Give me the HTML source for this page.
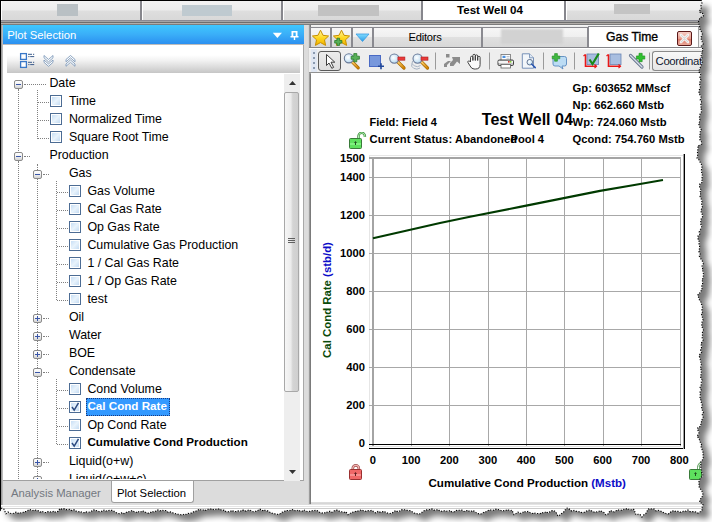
<!DOCTYPE html>
<html><head><meta charset="utf-8">
<style>
*{margin:0;padding:0;box-sizing:border-box}
html,body{width:712px;height:522px;overflow:hidden;background:#fff}
body{position:relative;font-family:"Liberation Sans",sans-serif;font-size:12px;color:#000}
.a{position:absolute}
#shadow{position:absolute;left:0;top:0}
#app{position:absolute;left:0;top:0;width:712px;height:522px;background:#d6d6d6;overflow:hidden}
.t{position:absolute;white-space:nowrap;line-height:1}
#toptabs{left:0;top:0;width:712px;height:20px;background:linear-gradient(#f3f3f3 0,#ededed 9px,#dedede 10px,#d8d8d8 20px);border-top:1px solid #000}
.blur{position:absolute;background:#b9c0c4;filter:blur(0.6px)}
.tsep{position:absolute;top:1px;width:3px;height:19px;background:linear-gradient(90deg,#86868c 0,#86868c 2px,#fff 2px)}
#hdr{left:3px;top:25px;width:301px;height:19px;background:linear-gradient(#3fc7fe,#3aaef8 50%,#2b90f0)}
#tb1{left:7px;top:48px;width:293px;height:25px;background:linear-gradient(#fff 0,#fff 28%,#f2f2f2 50%,#d8d8d8 80%,#c6c6c6 100%)}
#tree{left:3px;top:45px;width:301px;height:436px;background:#fff;border-right:1px solid #a8a8a8;border-bottom:1px solid #a0a0a0}
.row{position:absolute;font-size:12.4px;line-height:1;white-space:nowrap;color:#000}
.cb{position:absolute;width:12px;height:12px;border:1px solid #4c6c94;box-shadow:inset 0 0 0 1px #fff;background:linear-gradient(135deg,#c0daf4,#e8f3fc 50%,#bcd6f0)}
.exp{position:absolute;width:9px;height:9px;border:1px solid #8a8a8a;border-radius:2px;background:linear-gradient(#fff,#f0f0f0 50%,#d4d4d4)}
.exp::after{content:"";position:absolute;left:1px;top:3px;width:5px;height:1px;background:#3a56a8}
.exp.plus::before{content:"";position:absolute;left:3px;top:1px;width:1px;height:5px;background:#3a56a8}
.vd{position:absolute;width:1px;border-left:1px dotted #808080}
.hd{position:absolute;height:1px;border-top:1px dotted #808080}
#chart{left:311px;top:73px;width:401px;height:430px;background:#fff}
.rtab{position:absolute;top:27px;height:20px;border:1px solid #8a8a90;border-bottom:none;background:linear-gradient(#f6f6f6,#efefef 50%,#e0e0e0 50%,#d8d8d8)}
.tbsep{position:absolute;top:52px;width:2px;height:18px;border-left:1px solid #a0a0a0;border-right:1px solid #fff}
.gl{position:absolute;background:#a8a8a8}
.yl{position:absolute;font:bold 11.2px "Liberation Sans",sans-serif;line-height:1;text-align:right}
.xl{position:absolute;font:bold 11.2px "Liberation Sans",sans-serif;line-height:1;text-align:center}
</style></head><body>
<svg id="shadow" width="712" height="522"><defs><filter id="bl" x="-10%" y="-10%" width="120%" height="120%"><feGaussianBlur stdDeviation="3"/></filter></defs><path d="M0.0 0.0 L700.9 0.0 L702.0 2.0 L701.8 4.0 L700.8 6.0 L701.2 8.0 L700.1 10.0 L699.2 12.0 L703.5 14.0 L703.3 16.0 L699.7 18.0 L699.2 20.0 L698.4 22.0 L698.9 24.0 L699.5 26.0 L699.9 28.0 L700.0 30.0 L701.6 32.0 L702.3 34.0 L701.5 36.0 L700.8 38.0 L701.6 40.0 L702.3 42.0 L703.2 44.0 L701.3 46.0 L702.3 48.0 L703.2 50.0 L701.6 52.0 L702.2 54.0 L700.8 56.0 L702.0 58.0 L700.8 60.0 L702.2 62.0 L702.0 64.0 L701.0 66.0 L700.0 68.0 L699.3 70.0 L699.0 72.0 L700.7 74.0 L700.3 76.0 L699.7 78.0 L700.9 80.0 L699.9 82.0 L699.4 84.0 L700.5 86.0 L700.1 88.0 L699.3 90.0 L699.0 92.0 L699.2 94.0 L700.8 96.0 L701.1 98.0 L700.2 100.0 L701.5 102.0 L700.7 104.0 L701.4 106.0 L700.5 108.0 L701.6 110.0 L701.3 112.0 L700.0 114.0 L699.6 116.0 L699.3 118.0 L700.0 120.0 L699.4 122.0 L698.7 124.0 L699.4 126.0 L700.1 128.0 L701.4 130.0 L700.1 132.0 L700.1 134.0 L699.5 136.0 L700.1 138.0 L699.9 140.0 L701.5 142.0 L701.8 144.0 L697.7 146.0 L698.2 148.0 L697.7 150.0 L697.4 152.0 L697.8 154.0 L697.5 156.0 L697.0 158.0 L699.1 160.0 L700.0 162.0 L701.2 164.0 L701.9 166.0 L701.9 168.0 L701.4 170.0 L701.6 172.0 L701.8 174.0 L702.6 176.0 L701.9 178.0 L701.9 180.0 L702.5 182.0 L699.8 184.0 L699.4 186.0 L699.8 188.0 L701.2 190.0 L699.9 192.0 L700.6 194.0 L699.9 196.0 L700.6 198.0 L701.7 200.0 L701.9 202.0 L701.5 204.0 L702.5 206.0 L701.8 208.0 L701.1 210.0 L701.1 212.0 L702.0 214.0 L702.9 216.0 L701.6 218.0 L700.8 220.0 L700.7 222.0 L700.7 224.0 L701.7 226.0 L701.4 228.0 L700.1 230.0 L699.1 232.0 L699.8 234.0 L698.0 236.0 L698.0 238.0 L698.1 240.0 L699.6 242.0 L699.0 244.0 L699.6 246.0 L699.6 248.0 L699.1 250.0 L699.0 252.0 L700.1 254.0 L699.2 256.0 L700.3 258.0 L701.7 260.0 L702.8 262.0 L703.3 264.0 L702.0 266.0 L702.7 268.0 L702.2 270.0 L703.5 272.0 L703.3 274.0 L703.3 276.0 L703.1 278.0 L701.8 280.0 L702.9 282.0 L702.5 284.0 L701.7 286.0 L702.4 288.0 L701.0 290.0 L701.1 292.0 L698.2 294.0 L697.7 296.0 L699.0 298.0 L699.4 300.0 L700.9 302.0 L701.4 304.0 L702.3 306.0 L702.4 308.0 L701.9 310.0 L702.5 312.0 L701.3 314.0 L702.3 316.0 L702.4 318.0 L703.0 320.0 L702.0 322.0 L701.9 324.0 L701.6 326.0 L702.5 328.0 L703.4 330.0 L702.5 332.0 L702.3 334.0 L702.5 336.0 L702.2 338.0 L703.1 340.0 L702.0 342.0 L700.8 344.0 L701.6 346.0 L701.4 348.0 L700.5 350.0 L701.7 352.0 L700.0 354.0 L699.0 356.0 L700.0 358.0 L700.3 360.0 L700.7 362.0 L701.1 364.0 L701.6 366.0 L700.2 368.0 L701.2 370.0 L701.3 372.0 L701.3 374.0 L700.5 376.0 L700.8 378.0 L702.0 380.0 L701.3 382.0 L701.5 384.0 L700.6 386.0 L699.9 388.0 L701.2 390.0 L700.1 392.0 L700.1 394.0 L700.5 396.0 L699.8 398.0 L700.9 400.0 L701.1 402.0 L701.9 404.0 L702.2 406.0 L701.5 408.0 L702.2 410.0 L703.5 412.0 L702.1 414.0 L702.7 416.0 L703.4 418.0 L701.6 420.0 L701.4 422.0 L700.8 424.0 L700.9 426.0 L697.5 428.0 L697.6 430.0 L699.0 432.0 L698.7 434.0 L697.0 436.0 L698.5 438.0 L699.5 440.0 L700.1 442.0 L701.6 444.0 L700.8 446.0 L701.5 448.0 L702.2 450.0 L702.9 452.0 L703.0 454.0 L703.2 456.0 L703.2 458.0 L702.2 460.0 L700.7 462.0 L701.1 464.0 L700.4 466.0 L701.0 468.0 L701.4 470.0 L701.4 472.0 L702.6 474.0 L702.7 476.0 L700.1 478.0 L699.7 480.0 L698.8 482.0 L699.0 484.0 L698.9 486.0 L699.5 488.0 L701.1 490.0 L702.4 492.0 L702.8 494.0 L702.6 496.0 L701.0 498.0 L700.1 500.0 L699.5 502.0 L703.0 504.0 L702.6 506.0 L701.8 508.0 L702.0 510.0 L700.0 511.9 L698.0 513.1 L696.0 512.0 L694.0 511.6 L692.0 511.6 L690.0 511.6 L688.0 510.0 L686.0 511.2 L684.0 510.9 L682.0 511.9 L680.0 512.1 L678.0 511.3 L676.0 511.6 L674.0 510.5 L672.0 511.1 L670.0 512.6 L668.0 514.1 L666.0 513.6 L664.0 512.7 L662.0 511.6 L660.0 510.8 L658.0 510.2 L656.0 510.8 L654.0 508.9 L652.0 509.1 L650.0 508.6 L648.0 509.1 L646.0 513.3 L644.0 514.6 L642.0 517.0 L640.0 514.3 L638.0 514.3 L636.0 514.8 L634.0 509.5 L632.0 509.3 L630.0 510.3 L628.0 508.6 L626.0 508.9 L624.0 509.3 L622.0 510.1 L620.0 510.5 L618.0 509.7 L616.0 510.8 L614.0 511.9 L612.0 511.0 L610.0 510.6 L608.0 514.0 L606.0 514.9 L604.0 512.5 L602.0 511.4 L600.0 510.6 L598.0 512.0 L596.0 511.8 L594.0 512.0 L592.0 511.1 L590.0 509.9 L588.0 510.4 L586.0 511.2 L584.0 512.4 L582.0 512.6 L580.0 511.7 L578.0 511.6 L576.0 511.1 L574.0 510.4 L572.0 511.3 L570.0 509.6 L568.0 508.0 L566.0 508.4 L564.0 511.8 L562.0 513.0 L560.0 514.8 L558.0 516.2 L556.0 512.1 L554.0 510.7 L552.0 510.6 L550.0 511.7 L548.0 512.9 L546.0 511.6 L544.0 513.1 L542.0 512.5 L540.0 513.6 L538.0 513.5 L536.0 513.5 L534.0 512.8 L532.0 513.5 L530.0 512.5 L528.0 511.4 L526.0 512.2 L524.0 511.3 L522.0 513.2 L520.0 513.3 L518.0 512.1 L516.0 513.5 L514.0 514.7 L512.0 510.2 L510.0 510.8 L508.0 509.6 L506.0 510.3 L504.0 510.6 L502.0 511.0 L500.0 510.1 L498.0 509.5 L496.0 509.1 L494.0 510.1 L492.0 510.4 L490.0 509.7 L488.0 510.5 L486.0 511.7 L484.0 512.1 L482.0 513.6 L480.0 514.1 L478.0 513.6 L476.0 512.4 L474.0 511.0 L472.0 510.7 L470.0 511.9 L468.0 510.3 L466.0 510.8 L464.0 511.5 L462.0 510.1 L460.0 510.3 L458.0 510.2 L456.0 510.5 L454.0 511.9 L452.0 511.9 L450.0 510.5 L448.0 511.5 L446.0 510.8 L444.0 510.8 L442.0 511.3 L440.0 511.0 L438.0 509.4 L436.0 510.2 L434.0 510.1 L432.0 508.8 L430.0 509.5 L428.0 509.8 L426.0 509.9 L424.0 510.8 L422.0 512.3 L420.0 513.8 L418.0 514.0 L416.0 513.3 L414.0 513.0 L412.0 511.6 L410.0 510.6 L408.0 510.5 L406.0 509.8 L404.0 509.7 L402.0 509.6 L400.0 510.8 L398.0 511.9 L396.0 510.6 L394.0 511.5 L392.0 513.2 L390.0 513.5 L388.0 513.3 L386.0 512.4 L384.0 511.3 L382.0 511.9 L380.0 512.1 L378.0 511.3 L376.0 513.0 L374.0 511.9 L372.0 510.2 L370.0 510.8 L368.0 510.6 L366.0 511.2 L364.0 511.0 L362.0 510.0 L360.0 510.3 L358.0 511.0 L356.0 511.1 L354.0 512.1 L352.0 512.2 L350.0 513.4 L348.0 514.7 L346.0 511.8 L344.0 512.4 L342.0 511.7 L340.0 511.7 L338.0 510.2 L336.0 510.1 L334.0 510.9 L332.0 512.2 L330.0 511.2 L328.0 512.3 L326.0 511.9 L324.0 513.4 L322.0 512.9 L320.0 512.5 L318.0 511.1 L316.0 510.2 L314.0 510.6 L312.0 510.7 L310.0 511.2 L308.0 511.6 L306.0 511.2 L304.0 509.9 L302.0 511.2 L300.0 510.9 L298.0 510.0 L296.0 511.3 L294.0 509.9 L292.0 509.6 L290.0 510.4 L288.0 510.5 L286.0 510.4 L284.0 511.6 L282.0 512.3 L280.0 513.8 L278.0 514.4 L276.0 514.2 L274.0 513.5 L272.0 513.1 L270.0 512.3 L268.0 510.9 L266.0 510.8 L264.0 509.7 L262.0 510.7 L260.0 509.1 L258.0 510.2 L256.0 511.1 L254.0 511.8 L252.0 511.4 L250.0 510.0 L248.0 510.2 L246.0 511.1 L244.0 510.1 L242.0 510.1 L240.0 511.5 L238.0 510.9 L236.0 511.6 L234.0 511.5 L232.0 510.3 L230.0 511.6 L228.0 511.7 L226.0 511.6 L224.0 510.1 L222.0 510.6 L220.0 509.1 L218.0 509.0 L216.0 509.3 L214.0 509.8 L212.0 508.9 L210.0 509.0 L208.0 509.3 L206.0 510.3 L204.0 509.6 L202.0 510.6 L200.0 509.2 L198.0 509.9 L196.0 511.0 L194.0 511.6 L192.0 512.7 L190.0 513.6 L188.0 513.4 L186.0 514.4 L184.0 514.2 L182.0 515.0 L180.0 514.5 L178.0 514.2 L176.0 513.8 L174.0 513.4 L172.0 512.4 L170.0 511.9 L168.0 512.1 L166.0 510.5 L164.0 510.6 L162.0 510.2 L160.0 510.8 L158.0 509.9 L156.0 510.8 L154.0 512.1 L152.0 511.4 L150.0 512.9 L148.0 513.1 L146.0 512.6 L144.0 511.2 L142.0 510.9 L140.0 512.5 L138.0 511.4 L136.0 512.5 L134.0 511.6 L132.0 510.6 L130.0 511.4 L128.0 511.8 L126.0 512.4 L124.0 513.6 L122.0 512.7 L120.0 513.7 L118.0 513.4 L116.0 512.4 L114.0 511.2 L112.0 510.3 L110.0 510.4 L108.0 510.5 L106.0 511.0 L104.0 510.0 L102.0 511.1 L100.0 512.0 L98.0 511.2 L96.0 510.4 L94.0 509.8 L92.0 510.8 L90.0 512.0 L88.0 512.4 L86.0 511.8 L84.0 512.6 L82.0 512.4 L80.0 511.5 L78.0 511.8 L76.0 510.9 L74.0 509.6 L72.0 510.6 L70.0 509.3 L68.0 509.7 L66.0 509.6 L64.0 508.7 L62.0 509.3 L60.0 508.5 L58.0 511.3 L56.0 512.5 L54.0 511.1 L52.0 512.1 L50.0 511.8 L48.0 511.6 L46.0 512.5 L44.0 512.4 L42.0 511.2 L40.0 512.1 L38.0 510.6 L36.0 510.2 L34.0 510.1 L32.0 510.5 L30.0 509.5 L28.0 510.3 L26.0 511.5 L24.0 511.7 L22.0 513.2 L20.0 512.6 L18.0 513.1 L16.0 512.1 L14.0 513.2 L12.0 513.8 L10.0 513.1 L8.0 512.0 L6.0 513.8 L4.0 509.2 L2.0 508.0 L0.0 510.9 L0.0 511.5 Z" fill="#000" fill-opacity="0.52" filter="url(#bl)" transform="translate(7,6.5)"/></svg>
<div id="app" style="clip-path:polygon(0.0px 0.0px,700.9px 0.0px,702.0px 2.0px,701.8px 4.0px,700.8px 6.0px,701.2px 8.0px,700.1px 10.0px,699.2px 12.0px,703.5px 14.0px,703.3px 16.0px,699.7px 18.0px,699.2px 20.0px,698.4px 22.0px,698.9px 24.0px,699.5px 26.0px,699.9px 28.0px,700.0px 30.0px,701.6px 32.0px,702.3px 34.0px,701.5px 36.0px,700.8px 38.0px,701.6px 40.0px,702.3px 42.0px,703.2px 44.0px,701.3px 46.0px,702.3px 48.0px,703.2px 50.0px,701.6px 52.0px,702.2px 54.0px,700.8px 56.0px,702.0px 58.0px,700.8px 60.0px,702.2px 62.0px,702.0px 64.0px,701.0px 66.0px,700.0px 68.0px,699.3px 70.0px,699.0px 72.0px,700.7px 74.0px,700.3px 76.0px,699.7px 78.0px,700.9px 80.0px,699.9px 82.0px,699.4px 84.0px,700.5px 86.0px,700.1px 88.0px,699.3px 90.0px,699.0px 92.0px,699.2px 94.0px,700.8px 96.0px,701.1px 98.0px,700.2px 100.0px,701.5px 102.0px,700.7px 104.0px,701.4px 106.0px,700.5px 108.0px,701.6px 110.0px,701.3px 112.0px,700.0px 114.0px,699.6px 116.0px,699.3px 118.0px,700.0px 120.0px,699.4px 122.0px,698.7px 124.0px,699.4px 126.0px,700.1px 128.0px,701.4px 130.0px,700.1px 132.0px,700.1px 134.0px,699.5px 136.0px,700.1px 138.0px,699.9px 140.0px,701.5px 142.0px,701.8px 144.0px,697.7px 146.0px,698.2px 148.0px,697.7px 150.0px,697.4px 152.0px,697.8px 154.0px,697.5px 156.0px,697.0px 158.0px,699.1px 160.0px,700.0px 162.0px,701.2px 164.0px,701.9px 166.0px,701.9px 168.0px,701.4px 170.0px,701.6px 172.0px,701.8px 174.0px,702.6px 176.0px,701.9px 178.0px,701.9px 180.0px,702.5px 182.0px,699.8px 184.0px,699.4px 186.0px,699.8px 188.0px,701.2px 190.0px,699.9px 192.0px,700.6px 194.0px,699.9px 196.0px,700.6px 198.0px,701.7px 200.0px,701.9px 202.0px,701.5px 204.0px,702.5px 206.0px,701.8px 208.0px,701.1px 210.0px,701.1px 212.0px,702.0px 214.0px,702.9px 216.0px,701.6px 218.0px,700.8px 220.0px,700.7px 222.0px,700.7px 224.0px,701.7px 226.0px,701.4px 228.0px,700.1px 230.0px,699.1px 232.0px,699.8px 234.0px,698.0px 236.0px,698.0px 238.0px,698.1px 240.0px,699.6px 242.0px,699.0px 244.0px,699.6px 246.0px,699.6px 248.0px,699.1px 250.0px,699.0px 252.0px,700.1px 254.0px,699.2px 256.0px,700.3px 258.0px,701.7px 260.0px,702.8px 262.0px,703.3px 264.0px,702.0px 266.0px,702.7px 268.0px,702.2px 270.0px,703.5px 272.0px,703.3px 274.0px,703.3px 276.0px,703.1px 278.0px,701.8px 280.0px,702.9px 282.0px,702.5px 284.0px,701.7px 286.0px,702.4px 288.0px,701.0px 290.0px,701.1px 292.0px,698.2px 294.0px,697.7px 296.0px,699.0px 298.0px,699.4px 300.0px,700.9px 302.0px,701.4px 304.0px,702.3px 306.0px,702.4px 308.0px,701.9px 310.0px,702.5px 312.0px,701.3px 314.0px,702.3px 316.0px,702.4px 318.0px,703.0px 320.0px,702.0px 322.0px,701.9px 324.0px,701.6px 326.0px,702.5px 328.0px,703.4px 330.0px,702.5px 332.0px,702.3px 334.0px,702.5px 336.0px,702.2px 338.0px,703.1px 340.0px,702.0px 342.0px,700.8px 344.0px,701.6px 346.0px,701.4px 348.0px,700.5px 350.0px,701.7px 352.0px,700.0px 354.0px,699.0px 356.0px,700.0px 358.0px,700.3px 360.0px,700.7px 362.0px,701.1px 364.0px,701.6px 366.0px,700.2px 368.0px,701.2px 370.0px,701.3px 372.0px,701.3px 374.0px,700.5px 376.0px,700.8px 378.0px,702.0px 380.0px,701.3px 382.0px,701.5px 384.0px,700.6px 386.0px,699.9px 388.0px,701.2px 390.0px,700.1px 392.0px,700.1px 394.0px,700.5px 396.0px,699.8px 398.0px,700.9px 400.0px,701.1px 402.0px,701.9px 404.0px,702.2px 406.0px,701.5px 408.0px,702.2px 410.0px,703.5px 412.0px,702.1px 414.0px,702.7px 416.0px,703.4px 418.0px,701.6px 420.0px,701.4px 422.0px,700.8px 424.0px,700.9px 426.0px,697.5px 428.0px,697.6px 430.0px,699.0px 432.0px,698.7px 434.0px,697.0px 436.0px,698.5px 438.0px,699.5px 440.0px,700.1px 442.0px,701.6px 444.0px,700.8px 446.0px,701.5px 448.0px,702.2px 450.0px,702.9px 452.0px,703.0px 454.0px,703.2px 456.0px,703.2px 458.0px,702.2px 460.0px,700.7px 462.0px,701.1px 464.0px,700.4px 466.0px,701.0px 468.0px,701.4px 470.0px,701.4px 472.0px,702.6px 474.0px,702.7px 476.0px,700.1px 478.0px,699.7px 480.0px,698.8px 482.0px,699.0px 484.0px,698.9px 486.0px,699.5px 488.0px,701.1px 490.0px,702.4px 492.0px,702.8px 494.0px,702.6px 496.0px,701.0px 498.0px,700.1px 500.0px,699.5px 502.0px,703.0px 504.0px,702.6px 506.0px,701.8px 508.0px,702.0px 510.0px,700.0px 511.9px,698.0px 513.1px,696.0px 512.0px,694.0px 511.6px,692.0px 511.6px,690.0px 511.6px,688.0px 510.0px,686.0px 511.2px,684.0px 510.9px,682.0px 511.9px,680.0px 512.1px,678.0px 511.3px,676.0px 511.6px,674.0px 510.5px,672.0px 511.1px,670.0px 512.6px,668.0px 514.1px,666.0px 513.6px,664.0px 512.7px,662.0px 511.6px,660.0px 510.8px,658.0px 510.2px,656.0px 510.8px,654.0px 508.9px,652.0px 509.1px,650.0px 508.6px,648.0px 509.1px,646.0px 513.3px,644.0px 514.6px,642.0px 517.0px,640.0px 514.3px,638.0px 514.3px,636.0px 514.8px,634.0px 509.5px,632.0px 509.3px,630.0px 510.3px,628.0px 508.6px,626.0px 508.9px,624.0px 509.3px,622.0px 510.1px,620.0px 510.5px,618.0px 509.7px,616.0px 510.8px,614.0px 511.9px,612.0px 511.0px,610.0px 510.6px,608.0px 514.0px,606.0px 514.9px,604.0px 512.5px,602.0px 511.4px,600.0px 510.6px,598.0px 512.0px,596.0px 511.8px,594.0px 512.0px,592.0px 511.1px,590.0px 509.9px,588.0px 510.4px,586.0px 511.2px,584.0px 512.4px,582.0px 512.6px,580.0px 511.7px,578.0px 511.6px,576.0px 511.1px,574.0px 510.4px,572.0px 511.3px,570.0px 509.6px,568.0px 508.0px,566.0px 508.4px,564.0px 511.8px,562.0px 513.0px,560.0px 514.8px,558.0px 516.2px,556.0px 512.1px,554.0px 510.7px,552.0px 510.6px,550.0px 511.7px,548.0px 512.9px,546.0px 511.6px,544.0px 513.1px,542.0px 512.5px,540.0px 513.6px,538.0px 513.5px,536.0px 513.5px,534.0px 512.8px,532.0px 513.5px,530.0px 512.5px,528.0px 511.4px,526.0px 512.2px,524.0px 511.3px,522.0px 513.2px,520.0px 513.3px,518.0px 512.1px,516.0px 513.5px,514.0px 514.7px,512.0px 510.2px,510.0px 510.8px,508.0px 509.6px,506.0px 510.3px,504.0px 510.6px,502.0px 511.0px,500.0px 510.1px,498.0px 509.5px,496.0px 509.1px,494.0px 510.1px,492.0px 510.4px,490.0px 509.7px,488.0px 510.5px,486.0px 511.7px,484.0px 512.1px,482.0px 513.6px,480.0px 514.1px,478.0px 513.6px,476.0px 512.4px,474.0px 511.0px,472.0px 510.7px,470.0px 511.9px,468.0px 510.3px,466.0px 510.8px,464.0px 511.5px,462.0px 510.1px,460.0px 510.3px,458.0px 510.2px,456.0px 510.5px,454.0px 511.9px,452.0px 511.9px,450.0px 510.5px,448.0px 511.5px,446.0px 510.8px,444.0px 510.8px,442.0px 511.3px,440.0px 511.0px,438.0px 509.4px,436.0px 510.2px,434.0px 510.1px,432.0px 508.8px,430.0px 509.5px,428.0px 509.8px,426.0px 509.9px,424.0px 510.8px,422.0px 512.3px,420.0px 513.8px,418.0px 514.0px,416.0px 513.3px,414.0px 513.0px,412.0px 511.6px,410.0px 510.6px,408.0px 510.5px,406.0px 509.8px,404.0px 509.7px,402.0px 509.6px,400.0px 510.8px,398.0px 511.9px,396.0px 510.6px,394.0px 511.5px,392.0px 513.2px,390.0px 513.5px,388.0px 513.3px,386.0px 512.4px,384.0px 511.3px,382.0px 511.9px,380.0px 512.1px,378.0px 511.3px,376.0px 513.0px,374.0px 511.9px,372.0px 510.2px,370.0px 510.8px,368.0px 510.6px,366.0px 511.2px,364.0px 511.0px,362.0px 510.0px,360.0px 510.3px,358.0px 511.0px,356.0px 511.1px,354.0px 512.1px,352.0px 512.2px,350.0px 513.4px,348.0px 514.7px,346.0px 511.8px,344.0px 512.4px,342.0px 511.7px,340.0px 511.7px,338.0px 510.2px,336.0px 510.1px,334.0px 510.9px,332.0px 512.2px,330.0px 511.2px,328.0px 512.3px,326.0px 511.9px,324.0px 513.4px,322.0px 512.9px,320.0px 512.5px,318.0px 511.1px,316.0px 510.2px,314.0px 510.6px,312.0px 510.7px,310.0px 511.2px,308.0px 511.6px,306.0px 511.2px,304.0px 509.9px,302.0px 511.2px,300.0px 510.9px,298.0px 510.0px,296.0px 511.3px,294.0px 509.9px,292.0px 509.6px,290.0px 510.4px,288.0px 510.5px,286.0px 510.4px,284.0px 511.6px,282.0px 512.3px,280.0px 513.8px,278.0px 514.4px,276.0px 514.2px,274.0px 513.5px,272.0px 513.1px,270.0px 512.3px,268.0px 510.9px,266.0px 510.8px,264.0px 509.7px,262.0px 510.7px,260.0px 509.1px,258.0px 510.2px,256.0px 511.1px,254.0px 511.8px,252.0px 511.4px,250.0px 510.0px,248.0px 510.2px,246.0px 511.1px,244.0px 510.1px,242.0px 510.1px,240.0px 511.5px,238.0px 510.9px,236.0px 511.6px,234.0px 511.5px,232.0px 510.3px,230.0px 511.6px,228.0px 511.7px,226.0px 511.6px,224.0px 510.1px,222.0px 510.6px,220.0px 509.1px,218.0px 509.0px,216.0px 509.3px,214.0px 509.8px,212.0px 508.9px,210.0px 509.0px,208.0px 509.3px,206.0px 510.3px,204.0px 509.6px,202.0px 510.6px,200.0px 509.2px,198.0px 509.9px,196.0px 511.0px,194.0px 511.6px,192.0px 512.7px,190.0px 513.6px,188.0px 513.4px,186.0px 514.4px,184.0px 514.2px,182.0px 515.0px,180.0px 514.5px,178.0px 514.2px,176.0px 513.8px,174.0px 513.4px,172.0px 512.4px,170.0px 511.9px,168.0px 512.1px,166.0px 510.5px,164.0px 510.6px,162.0px 510.2px,160.0px 510.8px,158.0px 509.9px,156.0px 510.8px,154.0px 512.1px,152.0px 511.4px,150.0px 512.9px,148.0px 513.1px,146.0px 512.6px,144.0px 511.2px,142.0px 510.9px,140.0px 512.5px,138.0px 511.4px,136.0px 512.5px,134.0px 511.6px,132.0px 510.6px,130.0px 511.4px,128.0px 511.8px,126.0px 512.4px,124.0px 513.6px,122.0px 512.7px,120.0px 513.7px,118.0px 513.4px,116.0px 512.4px,114.0px 511.2px,112.0px 510.3px,110.0px 510.4px,108.0px 510.5px,106.0px 511.0px,104.0px 510.0px,102.0px 511.1px,100.0px 512.0px,98.0px 511.2px,96.0px 510.4px,94.0px 509.8px,92.0px 510.8px,90.0px 512.0px,88.0px 512.4px,86.0px 511.8px,84.0px 512.6px,82.0px 512.4px,80.0px 511.5px,78.0px 511.8px,76.0px 510.9px,74.0px 509.6px,72.0px 510.6px,70.0px 509.3px,68.0px 509.7px,66.0px 509.6px,64.0px 508.7px,62.0px 509.3px,60.0px 508.5px,58.0px 511.3px,56.0px 512.5px,54.0px 511.1px,52.0px 512.1px,50.0px 511.8px,48.0px 511.6px,46.0px 512.5px,44.0px 512.4px,42.0px 511.2px,40.0px 512.1px,38.0px 510.6px,36.0px 510.2px,34.0px 510.1px,32.0px 510.5px,30.0px 509.5px,28.0px 510.3px,26.0px 511.5px,24.0px 511.7px,22.0px 513.2px,20.0px 512.6px,18.0px 513.1px,16.0px 512.1px,14.0px 513.2px,12.0px 513.8px,10.0px 513.1px,8.0px 512.0px,6.0px 513.8px,4.0px 509.2px,2.0px 508.0px,0.0px 510.9px,0.0px 511.5px)">

<div class="a" id="toptabs"></div>
<div class="a" style="left:0;top:0;width:1px;height:510px;background:#000"></div>
<div class="a" style="left:1px;top:1px;width:1px;height:19px;background:#fff"></div>
<div class="blur" style="left:57px;top:4px;width:21px;height:12px"></div>
<div class="tsep" style="left:140px"></div>
<div class="blur" style="left:182px;top:5px;width:50px;height:11px;background:#bfcad0"></div>
<div class="tsep" style="left:281px"></div>
<div class="blur" style="left:318px;top:5px;width:61px;height:11px;background:#c2c2c2"></div>
<div class="tsep" style="left:421px"></div>
<div class="a" style="left:423px;top:1px;width:141px;height:19px;background:#fff"></div>
<div class="t" style="left:457px;top:3.1px;font:bold 11.6px 'Liberation Sans';">Test Well 04</div>
<div class="tsep" style="left:564px"></div>
<div class="blur" style="left:614px;top:4px;width:36px;height:10px;background:#c4c4c4"></div>
<div class="a" style="left:1px;top:20px;width:711px;height:5px;background:linear-gradient(#8a8a94 0,#8a8a94 1px,#a4a4a4 1px,#a4a4a4 2px,#6e6e6e 2px,#6e6e6e 3px,#b2aeaa 3px,#b2aeaa 4px,#7c7c7c 4px)"></div>


<div class="a" style="left:1px;top:25px;width:2px;height:483px;background:linear-gradient(90deg,#909090,#c8c8c8)"></div>
<div class="a" style="left:3px;top:25px;width:305px;height:483px;background:#dcdcdc"></div>
<div class="a" id="hdr"></div>
<div class="t" style="left:7.2px;top:29.5px;color:#fff;font-size:11.3px">Plot Selection</div>
<svg class="a" style="left:270px;top:30px" width="30" height="12" viewBox="0 0 30 12">
  <path d="M2.8 2.8 L12 2.8 L7.4 8 Z" fill="#fff"/>
  <path d="M21.5 1 h6 v5 h1 v1.4 h-3.3 v2.6 h-1.4 v-2.6 h-3.3 v-1.4 h1 z M23.3 2.4 v3.6 h2.4 v-3.6 z" fill="#fff" fill-rule="evenodd"/>
</svg>
<div class="a" style="left:3px;top:44px;width:301px;height:2px;background:linear-gradient(#bcbcbc 50%,#dedede 50%)"></div>
<div class="a" id="tree"></div>
<div class="a" id="tb1"></div>

<div class="a" style="left:0;top:73px;width:284px;height:406px;overflow:hidden"><div class="a" style="left:0;top:-73px;width:284px;height:600px">
<div class="vd" style="left:18px;top:89px;height:62px"></div>
<div class="vd" style="left:18px;top:161px;height:342px"></div>
<div class="vd" style="left:37px;top:90px;height:49px"></div>
<div class="vd" style="left:37px;top:164px;height:324px"></div>
<div class="vd" style="left:56px;top:181px;height:119px"></div>
<div class="vd" style="left:56px;top:379px;height:65px"></div>
<div class="exp" style="left:14px;top:80px"></div>
<div class="hd" style="left:24px;top:84px;width:22px"></div>
<div class="row" style="left:49.4px;top:77.0px">Date</div>
<div class="hd" style="left:38px;top:102px;width:11px"></div>
<div class="cb" style="left:50px;top:95px"></div>
<div class="row" style="left:68.9px;top:95.0px">Time</div>
<div class="hd" style="left:38px;top:120px;width:11px"></div>
<div class="cb" style="left:50px;top:113px"></div>
<div class="row" style="left:68.9px;top:113.0px">Normalized Time</div>
<div class="hd" style="left:38px;top:138px;width:11px"></div>
<div class="cb" style="left:50px;top:131px"></div>
<div class="row" style="left:68.9px;top:131.0px">Square Root Time</div>
<div class="exp" style="left:14px;top:152px"></div>
<div class="hd" style="left:24px;top:156px;width:6px"></div>
<div class="row" style="left:49.4px;top:149.0px">Production</div>
<div class="exp" style="left:33px;top:170px"></div>
<div class="hd" style="left:43px;top:174px;width:6px"></div>
<div class="row" style="left:68.9px;top:167.0px">Gas</div>
<div class="hd" style="left:57px;top:192px;width:11px"></div>
<div class="cb" style="left:69px;top:185px"></div>
<div class="row" style="left:87.4px;top:185.0px">Gas Volume</div>
<div class="hd" style="left:57px;top:210px;width:11px"></div>
<div class="cb" style="left:69px;top:203px"></div>
<div class="row" style="left:87.4px;top:203.0px">Cal Gas Rate</div>
<div class="hd" style="left:57px;top:228px;width:11px"></div>
<div class="cb" style="left:69px;top:221px"></div>
<div class="row" style="left:87.4px;top:221.0px">Op Gas Rate</div>
<div class="hd" style="left:57px;top:246px;width:11px"></div>
<div class="cb" style="left:69px;top:239px"></div>
<div class="row" style="left:87.4px;top:239.0px">Cumulative Gas Production</div>
<div class="hd" style="left:57px;top:264px;width:11px"></div>
<div class="cb" style="left:69px;top:257px"></div>
<div class="row" style="left:87.4px;top:257.0px">1 / Cal Gas Rate</div>
<div class="hd" style="left:57px;top:282px;width:11px"></div>
<div class="cb" style="left:69px;top:275px"></div>
<div class="row" style="left:87.4px;top:275.0px">1 / Op Gas Rate</div>
<div class="hd" style="left:57px;top:300px;width:11px"></div>
<div class="cb" style="left:69px;top:293px"></div>
<div class="row" style="left:87.4px;top:293.0px">test</div>
<div class="exp plus" style="left:33px;top:314px"></div>
<div class="hd" style="left:43px;top:318px;width:6px"></div>
<div class="row" style="left:68.9px;top:311.0px">Oil</div>
<div class="exp plus" style="left:33px;top:332px"></div>
<div class="hd" style="left:43px;top:336px;width:6px"></div>
<div class="row" style="left:68.9px;top:329.0px">Water</div>
<div class="exp plus" style="left:33px;top:350px"></div>
<div class="hd" style="left:43px;top:354px;width:6px"></div>
<div class="row" style="left:68.9px;top:347.0px">BOE</div>
<div class="exp" style="left:33px;top:368px"></div>
<div class="hd" style="left:43px;top:372px;width:6px"></div>
<div class="row" style="left:68.9px;top:365.0px">Condensate</div>
<div class="hd" style="left:57px;top:390px;width:11px"></div>
<div class="cb" style="left:69px;top:383px"></div>
<div class="row" style="left:87.4px;top:383.0px">Cond Volume</div>
<div class="hd" style="left:57px;top:408px;width:11px"></div>
<div class="cb" style="left:69px;top:401px"><svg width="11" height="11" style="position:absolute;left:0;top:0"><path d="M2 5 L4.2 8.2 L8.5 0.8" stroke="#2c4a80" stroke-width="1.5" fill="none"/></svg></div>
<div class="a" style="left:86px;top:398px;width:84px;height:18px;background:#3399ff;border:1px dotted #1a3a80"></div>
<div class="row" style="left:87.4px;top:400.1px;color:#fff;font-weight:bold;font-size:11.65px">Cal Cond Rate</div>
<div class="hd" style="left:57px;top:426px;width:11px"></div>
<div class="cb" style="left:69px;top:419px"></div>
<div class="row" style="left:87.4px;top:419.0px">Op Cond Rate</div>
<div class="hd" style="left:57px;top:444px;width:11px"></div>
<div class="cb" style="left:69px;top:437px"><svg width="11" height="11" style="position:absolute;left:0;top:0"><path d="M2 5 L4.2 8.2 L8.5 0.8" stroke="#2c4a80" stroke-width="1.5" fill="none"/></svg></div>
<div class="row" style="left:87.4px;top:436.1px;font-weight:bold;font-size:11.65px">Cumulative Cond Production</div>
<div class="exp plus" style="left:33px;top:458px"></div>
<div class="hd" style="left:43px;top:462px;width:6px"></div>
<div class="row" style="left:68.9px;top:455.0px">Liquid(o+w)</div>
<div class="exp plus" style="left:33px;top:476px"></div>
<div class="hd" style="left:43px;top:480px;width:6px"></div>
<div class="row" style="left:68.9px;top:473.0px">Liquid(o+w+c)</div>
</div></div>

<div class="t" style="left:11px;top:487.8px;color:#737880;font-size:11.3px">Analysis Manager</div>
<div class="a" style="left:111px;top:481px;width:83px;height:22px;background:#fff;border:1px solid #a0a0a0;border-top:none;border-radius:0 0 3px 3px"></div>
<div class="t" style="left:117px;top:487.8px;font-size:11.3px">Plot Selection</div>
<div class="a" style="left:308px;top:25px;width:3px;height:479px;background:linear-gradient(90deg,#f0f0f0,#8a8a8a 60%,#707070)"></div>
<div class="a" style="left:1px;top:505px;width:711px;height:17px;background:#fff"></div>
<div class="a" style="left:311px;top:501px;width:401px;height:1px;background:#fff"></div>
<div class="a" style="left:311px;top:502px;width:401px;height:1px;background:#dcdcdc"></div>
<div class="a" style="left:311px;top:504px;width:401px;height:1px;background:#e4e4e4"></div>
<div class="a" style="left:1px;top:506px;width:711px;height:1px;background:#e6e6e6"></div>
<div class="a" style="left:1px;top:508px;width:711px;height:1px;background:#cccccc"></div>

<!-- right panel tabstrip -->
<div class="a" style="left:311px;top:25px;width:401px;height:23px;background:linear-gradient(#f4f4f4 0,#f4f4f4 1px,#e6e6e6 2px,#e6e6e6 100%)"></div>
<div class="rtab" style="left:310px;width:21px"></div>
<div class="rtab" style="left:331px;width:21px"></div>
<div class="rtab" style="left:352px;width:21px"></div>
<div class="rtab" style="left:373px;width:109px"></div>
<div class="rtab" style="left:482px;width:106px"></div>
<div class="blur" style="left:501px;top:29px;width:62px;height:15px;background:#d2d2d2;filter:blur(1px)"></div>
<div class="a" style="left:588px;top:26px;width:112px;height:21px;background:#fff;border:1px solid #8a8a90;border-bottom:none"></div>
<div class="t" style="left:408.5px;top:32px;font-size:11.2px;letter-spacing:-0.25px">Editors</div>
<div class="t" style="left:606px;top:31.2px;font-size:12.2px;-webkit-text-stroke:0.35px #000">Gas Time</div>
<!-- close btn -->
<div class="a" style="left:677px;top:31px;width:15px;height:15px;background:linear-gradient(#f6ccc4,#eaa090 50%,#dc7a6a 55%,#eaa898);border:1px solid #5a1818;border-radius:2px"></div>
<svg class="a" style="left:677px;top:31px" width="15" height="15"><path d="M4 4 L11 11 M11 4 L4 11" stroke="#fff" stroke-width="2.6" stroke-linecap="round"/><path d="M4 4 L11 11 M11 4 L4 11" stroke="#d8d8d8" stroke-width="1.2" stroke-linecap="round"/></svg>
<div class="a" style="left:698px;top:27px;width:6px;height:20px;background:#f0f0f0;border-left:1px solid #a0a0a0"></div>
<!-- stars -->
<svg class="a" style="left:311px;top:29px" width="62" height="18" viewBox="0 0 62 18">
  <defs><linearGradient id="sg" x1="0" y1="0" x2="0" y2="1"><stop offset="0" stop-color="#fff6b0"/><stop offset="0.5" stop-color="#ffd820"/><stop offset="1" stop-color="#f0b000"/></linearGradient></defs>
  <path d="M9.5 1.2 L12 6.3 L17.6 7 L13.5 10.8 L14.6 16.4 L9.5 13.6 L4.4 16.4 L5.5 10.8 L1.4 7 L7 6.3 Z" fill="url(#sg)" stroke="#c89000" stroke-width="1" stroke-linejoin="round"/>
  <path d="M30.5 1.2 L33 6.3 L38.6 7 L34.5 10.8 L35.6 16.4 L30.5 13.6 L25.4 16.4 L26.5 10.8 L22.4 7 L28 6.3 Z" fill="url(#sg)" stroke="#c89000" stroke-width="1" stroke-linejoin="round"/>
  <path d="M26 9.2 h2.6 v2.3 h2.3 v2.6 h-2.3 v2.3 h-2.6 v-2.3 h-2.3 v-2.6 h2.3 z" fill="#58b058" stroke="#2a7a2a" stroke-width="0.8"/>
  <linearGradient id="dd" x1="0" y1="0" x2="0" y2="1"><stop offset="0" stop-color="#80dcff"/><stop offset="1" stop-color="#2a9ce8"/></linearGradient><path d="M45 5 L58 5 L51.5 12.5 Z" fill="url(#dd)" stroke="#3a9ae0" stroke-width="0.8" stroke-linejoin="round"/>
</svg>
<!-- toolbar -->
<div class="a" style="left:309px;top:47px;width:403px;height:1px;background:#848488"></div>
<div class="a" style="left:309px;top:48px;width:403px;height:1px;background:#fff"></div>
<div class="a" style="left:309px;top:49px;width:403px;height:23px;background:#eeeeee"></div>
<div class="a" style="left:309px;top:72px;width:403px;height:2px;background:linear-gradient(#8a8a8a,#a8a8a8)"></div>
<div class="a" style="left:311px;top:49px;width:6px;height:23px;background:#dfe6f2"></div>
<svg class="a" style="left:312px;top:51px" width="5" height="20"><g fill="#8a9ab0"><rect x="1" y="1" width="2" height="2"/><rect x="1" y="6" width="2" height="2"/><rect x="1" y="11" width="2" height="2"/><rect x="1" y="16" width="2" height="2"/></g></svg>
<div class="a" style="left:318px;top:51px;width:23px;height:20px;border:1px solid #5a5a5a;border-radius:3px;background:linear-gradient(#ececec,#dedede)"></div>
<svg class="a" style="left:309px;top:49px" width="403" height="23" viewBox="309 49 403 23">
 <defs>
  <radialGradient id="lens" cx="0.4" cy="0.4" r="0.7"><stop offset="0" stop-color="#ffffff"/><stop offset="0.6" stop-color="#cfe6f6"/><stop offset="1" stop-color="#9cc4e4"/></radialGradient>
  <linearGradient id="hand" x1="0" y1="0" x2="1" y2="1"><stop offset="0" stop-color="#ffd070"/><stop offset="1" stop-color="#d08000"/></linearGradient>
 </defs>
 <!-- cursor -->
 <path d="M326.5 54.5 L326.5 65.5 L329 63 L331.8 68.3 L333.6 67.4 L331 62.2 L334.8 62.2 Z" fill="#fdfdfd" stroke="#2a2a2a" stroke-width="0.9" stroke-linejoin="round"/>
 <!-- zoom+ -->
 <path d="M352.2 61.8 L358.2 67.8" stroke="#a86a00" stroke-width="3.2" stroke-linecap="round"/>
 <path d="M352.2 61.8 L358.2 67.8" stroke="url(#hand)" stroke-width="1.8" stroke-linecap="round"/>
 <circle cx="348.9" cy="58.3" r="4.6" fill="url(#lens)" stroke="#6a7a98" stroke-width="1.1"/>
 <path d="M353.8 53.6 h3 v2.6 h2.6 v3 h-2.6 v2.6 h-3 v-2.6 h-2.6 v-3 h2.6 z" fill="#58b058" stroke="#2a7a2a" stroke-width="0.8"/>
 <!-- rect -->
 <rect x="369.5" y="55.5" width="11" height="11" fill="#7898dc" stroke="#4a6ac4" stroke-width="1"/>
 <path d="M378 66.2 h6 M381 63.2 v6" stroke="#22489a" stroke-width="1.6"/>
 <!-- zoom- -->
 <path d="M398 62 L404 68" stroke="#a86a00" stroke-width="3.2" stroke-linecap="round"/>
 <path d="M398 62 L404 68" stroke="url(#hand)" stroke-width="1.8" stroke-linecap="round"/>
 <circle cx="394.3" cy="58.6" r="4.6" fill="url(#lens)" stroke="#6a7a98" stroke-width="1.1"/>
 <rect x="397.9" y="57" width="7" height="3.2" fill="#e83a3a" stroke="#b02020" stroke-width="0.6"/>
 <!-- zoom stack -->
 <path d="M412.5 61 a5 4 0 0 0 8 4.5 M412 63.5 a5 4 0 0 0 8 4.5" stroke="#a8b4c4" stroke-width="1" fill="none"/>
 <path d="M421.5 62 L427.5 68" stroke="#a86a00" stroke-width="3.2" stroke-linecap="round"/>
 <path d="M421.5 62 L427.5 68" stroke="url(#hand)" stroke-width="1.8" stroke-linecap="round"/>
 <circle cx="417.6" cy="58.6" r="4.6" fill="url(#lens)" stroke="#6a7a98" stroke-width="1.1"/>
 <rect x="421" y="57" width="7" height="3.2" fill="#e83a3a" stroke="#b02020" stroke-width="0.6"/>
 <!-- sep -->
 <path d="M435.5 52.5 v17 M489.5 52.5 v17 M543.5 52.5 v17 M574.5 52.5 v17 M649.5 52.5 v17" stroke="#9a9a9a" stroke-width="1"/>
 <!-- pan grey -->
 <g fill="#8c8c8c"><rect x="446" y="54" width="3.5" height="3.5"/><path d="M452 57 L460 57 L460 64 L457 61.5 L453.5 66 L450 66 L450 63 L453 60 Z"/><path d="M448 61 L451 61 L446 66 L444 66 L444 64 Z"/><rect x="444" y="64" width="3" height="3"/></g>
 <!-- hand -->
 <path d="M470.5 62 v-4.5 a1.2 1.2 0 0 1 2.4 0 v3 v-5 a1.2 1.2 0 0 1 2.4 0 v5 v-4.4 a1.2 1.2 0 0 1 2.4 0 v4.4 v-3 a1.2 1.2 0 0 1 2.4 0 v7 q0 4.5 -4.5 4.5 h-1.5 q-2.5 0 -4 -3 l-2.2 -3.6 a1.1 1.1 0 0 1 1.8 -1.2 z" fill="#fafafa" stroke="#303030" stroke-width="0.9" stroke-linejoin="round"/>
 <!-- printer -->
 <rect x="501" y="54.5" width="9.5" height="6" fill="#fff" stroke="#707070" stroke-width="0.8"/>
 <rect x="502.5" y="55.8" width="3" height="2.2" fill="#4a90e0"/>
 <path d="M506.5 56.5 h3 M506.5 58.2 h3" stroke="#90a0b0" stroke-width="0.6"/>
 <rect x="498" y="60" width="15.5" height="5.5" rx="1.2" fill="#c8c8c8" stroke="#404040" stroke-width="1"/>
 <rect x="498.5" y="61" width="14.5" height="2" fill="#f4f4f4"/>
 <rect x="501" y="64.5" width="9.5" height="3.5" fill="#fff" stroke="#606060" stroke-width="0.8"/>
 <rect x="508" y="61" width="1.6" height="1.6" fill="#e03030"/><rect x="509.8" y="61" width="1.6" height="1.6" fill="#80d030"/>
 <!-- preview -->
 <path d="M522.3 53.8 h7.2 l4 4 v10.4 h-11.2 z" fill="#f2f6fa" stroke="#6a86b0" stroke-width="0.9"/>
 <path d="M529.5 53.8 v4 h4" fill="#dde8f4" stroke="#6a86b0" stroke-width="0.8"/>
 <circle cx="529.8" cy="62.2" r="2.8" fill="url(#lens)" stroke="#5a6a88" stroke-width="0.9"/>
 <path d="M531.8 64.2 L535.2 67.6" stroke="#2a56b0" stroke-width="1.6" stroke-linecap="round"/>
 <!-- comment+ -->
 <path d="M555 56.5 h9.5 a2 2 0 0 1 2 2 v5.5 a2 2 0 0 1 -2 2 h-2.5 l1 3 l-4 -3 h-4 a2 2 0 0 1 -2 -2 v-5.5 a2 2 0 0 1 2 -2 z" fill="#bcdcf4" stroke="#5a8ac0" stroke-width="0.9"/>
 <path d="M554.6 53.6 h2.8 v2.4 h2.4 v2.8 h-2.4 v2.4 h-2.8 v-2.4 h-2.4 v-2.8 h2.4 z" fill="#40b840" stroke="#208a20" stroke-width="0.6"/>
 <!-- check icon -->
 <rect x="587" y="54" width="11.4" height="10.6" fill="#a8bee0" stroke="#6a86b4" stroke-width="0.8"/>
 <path d="M585.5 54.5 v11.8 h11" stroke="#e81818" stroke-width="1.6" fill="none"/>
 <path d="M594.5 64.5 l2 1.8 l-2 1.8" stroke="#e81818" stroke-width="1.2" fill="none"/>
 <path d="M583.5 56 l2 -1.5" stroke="#e81818" stroke-width="1.2"/>
 <path d="M589.5 59.5 l3 4.5 l6.3 -10.5" stroke="#188a18" stroke-width="2.2" fill="none"/>
 <!-- box icon -->
 <rect x="610" y="54" width="11" height="10.6" fill="#a8bee0" stroke="#6a86b4" stroke-width="0.8"/>
 <path d="M608.5 54.5 v11.8 h12" stroke="#e81818" stroke-width="1.6" fill="none"/>
 <path d="M618.5 64.5 l2 1.8 l-2 1.8" stroke="#e81818" stroke-width="1.2" fill="none"/>
 <path d="M606.5 56 l2 -1.5" stroke="#e81818" stroke-width="1.2"/>
 <!-- ruler+ -->
 <path d="M630.5 55.5 L642 67" stroke="#6a7890" stroke-width="3.2" stroke-linecap="round"/>
 <path d="M630.5 55.5 L642 67" stroke="#d8dee8" stroke-width="1.4" stroke-linecap="round"/>
 <path d="M639 53.3 h3.2 v2.6 h2.6 v3.2 h-2.6 v2.6 h-3.2 v-2.6 h-2.6 v-3.2 h2.6 z" fill="#30c030" stroke="#1a8a1a" stroke-width="0.6"/>
</svg>
<div class="a" style="left:652px;top:51px;width:60px;height:20px;border:1px solid #8a8a8a;border-right:none;border-radius:3px 0 0 3px;background:linear-gradient(#f8f8f8,#e6e6e6)"></div>
<div class="t" style="left:655.5px;top:55.5px;font-size:11.4px;letter-spacing:-0.35px;color:#101830">Coordinat</div>

<div class="a" id="chart" style="height:428px"></div>
<div class="a" style="left:369px;top:155px;width:315px;height:1px;background:#e6e6e6"></div>
<div class="a" style="left:369px;top:155px;width:1px;height:293px;background:#e6e6e6"></div>
<div class="gl" style="left:411px;top:157px;width:1px;height:290px"></div>
<div class="gl" style="left:449px;top:157px;width:1px;height:290px"></div>
<div class="gl" style="left:488px;top:157px;width:1px;height:290px"></div>
<div class="gl" style="left:526px;top:157px;width:1px;height:290px"></div>
<div class="gl" style="left:564px;top:157px;width:1px;height:290px"></div>
<div class="gl" style="left:603px;top:157px;width:1px;height:290px"></div>
<div class="gl" style="left:641px;top:157px;width:1px;height:290px"></div>
<div class="gl" style="left:369px;top:177px;width:312px;height:1px"></div>
<div class="gl" style="left:369px;top:215px;width:312px;height:1px"></div>
<div class="gl" style="left:369px;top:253px;width:312px;height:1px"></div>
<div class="gl" style="left:369px;top:291px;width:312px;height:1px"></div>
<div class="gl" style="left:369px;top:329px;width:312px;height:1px"></div>
<div class="gl" style="left:369px;top:367px;width:312px;height:1px"></div>
<div class="gl" style="left:369px;top:405px;width:312px;height:1px"></div>
<div class="a" style="left:369px;top:157px;width:312px;height:2px;background:#a4a4a4"></div>
<div class="a" style="left:372px;top:157px;width:2px;height:290px;background:#a4a4a4"></div>
<div class="a" style="left:680px;top:157px;width:1px;height:290px;background:#a8a8a8"></div>
<div class="a" style="left:369px;top:444px;width:312px;height:1px;background:#000"></div>
<div class="a" style="left:369px;top:446px;width:312px;height:1px;background:#e4e4e4"></div>
<div class="a" style="left:369px;top:448px;width:316px;height:1px;background:#000"></div>
<div class="a" style="left:683px;top:154px;width:1px;height:295px;background:#a0a0a0"></div>
<div class="a" style="left:684px;top:154px;width:1px;height:295px;background:#000"></div>
<svg class="a" style="left:0;top:0" width="712" height="522"><path d="M373 238.3 L406 230.7 L440 223.1 L470 216.8 L520 206.9 L550 200.9 L600 190.9 L630 185.8 L663 180" stroke="#003a00" stroke-width="2.1" fill="none" stroke-linejoin="round"/></svg>
<div class="yl" style="left:325px;width:40px;top:152.8px">1500</div>
<div class="yl" style="left:325px;width:40px;top:171.8px">1400</div>
<div class="yl" style="left:325px;width:40px;top:209.8px">1200</div>
<div class="yl" style="left:325px;width:40px;top:247.8px">1000</div>
<div class="yl" style="left:325px;width:40px;top:285.8px">800</div>
<div class="yl" style="left:325px;width:40px;top:323.8px">600</div>
<div class="yl" style="left:325px;width:40px;top:361.8px">400</div>
<div class="yl" style="left:325px;width:40px;top:399.8px">200</div>
<div class="yl" style="left:325px;width:40px;top:437.8px">0</div>
<div class="xl" style="left:352.8px;width:40px;top:454.9px">0</div>
<div class="xl" style="left:391.1px;width:40px;top:454.9px">100</div>
<div class="xl" style="left:429.4px;width:40px;top:454.9px">200</div>
<div class="xl" style="left:467.8px;width:40px;top:454.9px">300</div>
<div class="xl" style="left:506.1px;width:40px;top:454.9px">400</div>
<div class="xl" style="left:544.4px;width:40px;top:454.9px">500</div>
<div class="xl" style="left:582.7px;width:40px;top:454.9px">600</div>
<div class="xl" style="left:621.0px;width:40px;top:454.9px">700</div>
<div class="xl" style="left:659.4px;width:40px;top:454.9px">800</div>
<div class="t" style="left:369.6px;top:116.2px;font:bold 11px 'Liberation Sans'">Field: Field 4</div>
<div class="t" style="left:369.6px;top:133px;font:bold 11.2px 'Liberation Sans';letter-spacing:0.08px">Current Status: Abandoned</div>
<div class="t" style="left:510.5px;top:133px;font:bold 11.2px 'Liberation Sans'">Pool 4</div>
<div class="t" style="left:481.8px;top:111px;font:bold 16px 'Liberation Sans'">Test Well 04</div>
<div class="t" style="left:572.6px;top:82.2px;font:bold 11.2px 'Liberation Sans'">Gp: 603652 MMscf</div>
<div class="t" style="left:572.6px;top:99.2px;font:bold 11.2px 'Liberation Sans'">Np: 662.660 Mstb</div>
<div class="t" style="left:572.6px;top:116.2px;font:bold 11.2px 'Liberation Sans'">Wp: 724.060 Mstb</div>
<div class="t" style="left:572.6px;top:133.2px;font:bold 11.2px 'Liberation Sans'">Qcond: 754.760 Mstb</div>
<div class="t" style="left:428.5px;top:476.7px;font:bold 11.58px 'Liberation Sans'">Cumulative Cond Production <span style="color:#0c0cc8">(Mstb)</span></div>
<div class="t" style="left:327px;top:300px;font:bold 11.4px 'Liberation Sans';color:#0a4a0a;transform:translate(-50%,-50%) rotate(-90deg)">Cal Cond Rate <span style="color:#0c0cc8">(stb/d)</span></div>

<!-- left toolbar icons -->
<svg class="a" style="left:0;top:48px" width="90" height="25" viewBox="0 48 90 25">
  <rect x="20.6" y="53.6" width="5.8" height="5.8" fill="#fff" stroke="#3a78c8" stroke-width="1.3"/>
  <rect x="20.6" y="61.6" width="5.8" height="5.8" fill="#fff" stroke="#3a78c8" stroke-width="1.3"/>
  <path d="M28 54.3 h4 M33 54.3 h1.2 M28.3 56.6 h1.2 M30.2 56.6 h4 M28 62.3 h4 M33 62.3 h1.2 M28.3 64.6 h1.2 M30.2 64.6 h4" stroke="#3a5a8a" stroke-width="1"/>
  <path d="M44 55.5 L48.5 59.5 L53 55.5 L53 57.8 L48.5 61.8 L44 57.8 Z M44 60 L48.5 64 L53 60 L53 62.3 L48.5 66.3 L44 62.3 Z" stroke="#7896b8" stroke-width="0.85" fill="#fff" stroke-linejoin="miter"/>
  <path d="M66 59.5 L70.5 55.5 L75 59.5 L75 61.8 L70.5 57.8 L66 61.8 Z M66 64 L70.5 60 L75 64 L75 66.3 L70.5 62.3 L66 66.3 Z" stroke="#7896b8" stroke-width="0.85" fill="#fff" stroke-linejoin="miter"/>
</svg>
<!-- scrollbar -->
<div class="a" style="left:284px;top:74px;width:16px;height:407px;background:#eeeeee"></div>
<svg class="a" style="left:284px;top:74px" width="16" height="407">
  <path d="M5 11 L8.5 7 L12 11 Z" fill="#333"/>
  <path d="M5 396 L12 396 L8.5 400 Z" fill="#333"/>
</svg>
<div class="a" style="left:284px;top:92px;width:15px;height:300px;border:1px solid #a8a8a8;border-radius:2px;background:linear-gradient(90deg,#f6f6f6,#ececec 45%,#d4d4d4 60%,#cfcfcf)"></div>
<svg class="a" style="left:287px;top:237px" width="9" height="8"><path d="M1 1.5 h7 M1 3.5 h7 M1 5.5 h7" stroke="#606060" stroke-width="1"/></svg>
<!-- locks -->
<svg class="a" style="left:348px;top:132px" width="20" height="18" viewBox="0 0 20 18">
  <path d="M10.5 6.5 v-2.5 a3.2 3.2 0 0 1 6.4 0 v1" stroke="#3a8a3a" stroke-width="2.4" fill="none"/>
  <path d="M10.5 6.5 v-2.5 a3.2 3.2 0 0 1 6.4 0 v1" stroke="#b0f0b0" stroke-width="1" fill="none"/>
  <rect x="1.5" y="6.5" width="12" height="10" rx="1" fill="#5ee05e" stroke="#3a7a3a" stroke-width="1"/>
  <rect x="2" y="11" width="11" height="2" fill="#80f080"/>
  <path d="M7.5 9 l-1.5 2 h3 z M7 11 h1 v2 h-1z" fill="#205020"/>
</svg>
<svg class="a" style="left:348px;top:462px" width="16" height="19" viewBox="0 0 16 19">
  <path d="M4.8 8 v-1.8 a3 2.8 0 0 1 6 0 v1.8" stroke="#a05050" stroke-width="2.6" fill="none"/>
  <path d="M4.8 8 v-1.8 a3 2.8 0 0 1 6 0 v1.8" stroke="#f4b4b0" stroke-width="1.2" fill="none"/>
  <rect x="1.5" y="7.5" width="12" height="10" rx="1" fill="#f06868" stroke="#9a3030" stroke-width="1"/>
  <rect x="2" y="12" width="11" height="2" fill="#f89090"/>
  <path d="M7.5 10 l-1.5 2 h3 z M7 12 h1 v2 h-1z" fill="#602020"/>
</svg>
<svg class="a" style="left:688px;top:461px" width="20" height="20" viewBox="0 0 20 20">
  <path d="M10.5 8 v-2.5 a3.2 3.2 0 0 1 6.4 0 v1" stroke="#3a8a3a" stroke-width="2.4" fill="none"/>
  <path d="M10.5 8 v-2.5 a3.2 3.2 0 0 1 6.4 0 v1" stroke="#ffffff" stroke-width="1" fill="none"/>
  <rect x="1.5" y="8.5" width="12" height="10" rx="1" fill="#5ee05e" stroke="#3a7a3a" stroke-width="1"/>
  <path d="M7.5 11 l-1.5 2 h3 z M7 13 h1 v2 h-1z" fill="#205020"/>
</svg>

</div>
<svg class="a" style="left:0;top:0;z-index:5" width="712" height="522"><path d="M700.9 0.0 L702.0 2.0 L701.8 4.0 L700.8 6.0 L701.2 8.0 L700.1 10.0 L699.2 12.0 L703.5 14.0 L703.3 16.0 L699.7 18.0 L699.2 20.0 L698.4 22.0 L698.9 24.0 L699.5 26.0 L699.9 28.0 L700.0 30.0 L701.6 32.0 L702.3 34.0 L701.5 36.0 L700.8 38.0 L701.6 40.0 L702.3 42.0 L703.2 44.0 L701.3 46.0 L702.3 48.0 L703.2 50.0 L701.6 52.0 L702.2 54.0 L700.8 56.0 L702.0 58.0 L700.8 60.0 L702.2 62.0 L702.0 64.0 L701.0 66.0 L700.0 68.0 L699.3 70.0 L699.0 72.0 L700.7 74.0 L700.3 76.0 L699.7 78.0 L700.9 80.0 L699.9 82.0 L699.4 84.0 L700.5 86.0 L700.1 88.0 L699.3 90.0 L699.0 92.0 L699.2 94.0 L700.8 96.0 L701.1 98.0 L700.2 100.0 L701.5 102.0 L700.7 104.0 L701.4 106.0 L700.5 108.0 L701.6 110.0 L701.3 112.0 L700.0 114.0 L699.6 116.0 L699.3 118.0 L700.0 120.0 L699.4 122.0 L698.7 124.0 L699.4 126.0 L700.1 128.0 L701.4 130.0 L700.1 132.0 L700.1 134.0 L699.5 136.0 L700.1 138.0 L699.9 140.0 L701.5 142.0 L701.8 144.0 L697.7 146.0 L698.2 148.0 L697.7 150.0 L697.4 152.0 L697.8 154.0 L697.5 156.0 L697.0 158.0 L699.1 160.0 L700.0 162.0 L701.2 164.0 L701.9 166.0 L701.9 168.0 L701.4 170.0 L701.6 172.0 L701.8 174.0 L702.6 176.0 L701.9 178.0 L701.9 180.0 L702.5 182.0 L699.8 184.0 L699.4 186.0 L699.8 188.0 L701.2 190.0 L699.9 192.0 L700.6 194.0 L699.9 196.0 L700.6 198.0 L701.7 200.0 L701.9 202.0 L701.5 204.0 L702.5 206.0 L701.8 208.0 L701.1 210.0 L701.1 212.0 L702.0 214.0 L702.9 216.0 L701.6 218.0 L700.8 220.0 L700.7 222.0 L700.7 224.0 L701.7 226.0 L701.4 228.0 L700.1 230.0 L699.1 232.0 L699.8 234.0 L698.0 236.0 L698.0 238.0 L698.1 240.0 L699.6 242.0 L699.0 244.0 L699.6 246.0 L699.6 248.0 L699.1 250.0 L699.0 252.0 L700.1 254.0 L699.2 256.0 L700.3 258.0 L701.7 260.0 L702.8 262.0 L703.3 264.0 L702.0 266.0 L702.7 268.0 L702.2 270.0 L703.5 272.0 L703.3 274.0 L703.3 276.0 L703.1 278.0 L701.8 280.0 L702.9 282.0 L702.5 284.0 L701.7 286.0 L702.4 288.0 L701.0 290.0 L701.1 292.0 L698.2 294.0 L697.7 296.0 L699.0 298.0 L699.4 300.0 L700.9 302.0 L701.4 304.0 L702.3 306.0 L702.4 308.0 L701.9 310.0 L702.5 312.0 L701.3 314.0 L702.3 316.0 L702.4 318.0 L703.0 320.0 L702.0 322.0 L701.9 324.0 L701.6 326.0 L702.5 328.0 L703.4 330.0 L702.5 332.0 L702.3 334.0 L702.5 336.0 L702.2 338.0 L703.1 340.0 L702.0 342.0 L700.8 344.0 L701.6 346.0 L701.4 348.0 L700.5 350.0 L701.7 352.0 L700.0 354.0 L699.0 356.0 L700.0 358.0 L700.3 360.0 L700.7 362.0 L701.1 364.0 L701.6 366.0 L700.2 368.0 L701.2 370.0 L701.3 372.0 L701.3 374.0 L700.5 376.0 L700.8 378.0 L702.0 380.0 L701.3 382.0 L701.5 384.0 L700.6 386.0 L699.9 388.0 L701.2 390.0 L700.1 392.0 L700.1 394.0 L700.5 396.0 L699.8 398.0 L700.9 400.0 L701.1 402.0 L701.9 404.0 L702.2 406.0 L701.5 408.0 L702.2 410.0 L703.5 412.0 L702.1 414.0 L702.7 416.0 L703.4 418.0 L701.6 420.0 L701.4 422.0 L700.8 424.0 L700.9 426.0 L697.5 428.0 L697.6 430.0 L699.0 432.0 L698.7 434.0 L697.0 436.0 L698.5 438.0 L699.5 440.0 L700.1 442.0 L701.6 444.0 L700.8 446.0 L701.5 448.0 L702.2 450.0 L702.9 452.0 L703.0 454.0 L703.2 456.0 L703.2 458.0 L702.2 460.0 L700.7 462.0 L701.1 464.0 L700.4 466.0 L701.0 468.0 L701.4 470.0 L701.4 472.0 L702.6 474.0 L702.7 476.0 L700.1 478.0 L699.7 480.0 L698.8 482.0 L699.0 484.0 L698.9 486.0 L699.5 488.0 L701.1 490.0 L702.4 492.0 L702.8 494.0 L702.6 496.0 L701.0 498.0 L700.1 500.0 L699.5 502.0 L703.0 504.0 L702.6 506.0 L701.8 508.0 L702.0 510.0 L700.0 511.9 L698.0 513.1 L696.0 512.0 L694.0 511.6 L692.0 511.6 L690.0 511.6 L688.0 510.0 L686.0 511.2 L684.0 510.9 L682.0 511.9 L680.0 512.1 L678.0 511.3 L676.0 511.6 L674.0 510.5 L672.0 511.1 L670.0 512.6 L668.0 514.1 L666.0 513.6 L664.0 512.7 L662.0 511.6 L660.0 510.8 L658.0 510.2 L656.0 510.8 L654.0 508.9 L652.0 509.1 L650.0 508.6 L648.0 509.1 L646.0 513.3 L644.0 514.6 L642.0 517.0 L640.0 514.3 L638.0 514.3 L636.0 514.8 L634.0 509.5 L632.0 509.3 L630.0 510.3 L628.0 508.6 L626.0 508.9 L624.0 509.3 L622.0 510.1 L620.0 510.5 L618.0 509.7 L616.0 510.8 L614.0 511.9 L612.0 511.0 L610.0 510.6 L608.0 514.0 L606.0 514.9 L604.0 512.5 L602.0 511.4 L600.0 510.6 L598.0 512.0 L596.0 511.8 L594.0 512.0 L592.0 511.1 L590.0 509.9 L588.0 510.4 L586.0 511.2 L584.0 512.4 L582.0 512.6 L580.0 511.7 L578.0 511.6 L576.0 511.1 L574.0 510.4 L572.0 511.3 L570.0 509.6 L568.0 508.0 L566.0 508.4 L564.0 511.8 L562.0 513.0 L560.0 514.8 L558.0 516.2 L556.0 512.1 L554.0 510.7 L552.0 510.6 L550.0 511.7 L548.0 512.9 L546.0 511.6 L544.0 513.1 L542.0 512.5 L540.0 513.6 L538.0 513.5 L536.0 513.5 L534.0 512.8 L532.0 513.5 L530.0 512.5 L528.0 511.4 L526.0 512.2 L524.0 511.3 L522.0 513.2 L520.0 513.3 L518.0 512.1 L516.0 513.5 L514.0 514.7 L512.0 510.2 L510.0 510.8 L508.0 509.6 L506.0 510.3 L504.0 510.6 L502.0 511.0 L500.0 510.1 L498.0 509.5 L496.0 509.1 L494.0 510.1 L492.0 510.4 L490.0 509.7 L488.0 510.5 L486.0 511.7 L484.0 512.1 L482.0 513.6 L480.0 514.1 L478.0 513.6 L476.0 512.4 L474.0 511.0 L472.0 510.7 L470.0 511.9 L468.0 510.3 L466.0 510.8 L464.0 511.5 L462.0 510.1 L460.0 510.3 L458.0 510.2 L456.0 510.5 L454.0 511.9 L452.0 511.9 L450.0 510.5 L448.0 511.5 L446.0 510.8 L444.0 510.8 L442.0 511.3 L440.0 511.0 L438.0 509.4 L436.0 510.2 L434.0 510.1 L432.0 508.8 L430.0 509.5 L428.0 509.8 L426.0 509.9 L424.0 510.8 L422.0 512.3 L420.0 513.8 L418.0 514.0 L416.0 513.3 L414.0 513.0 L412.0 511.6 L410.0 510.6 L408.0 510.5 L406.0 509.8 L404.0 509.7 L402.0 509.6 L400.0 510.8 L398.0 511.9 L396.0 510.6 L394.0 511.5 L392.0 513.2 L390.0 513.5 L388.0 513.3 L386.0 512.4 L384.0 511.3 L382.0 511.9 L380.0 512.1 L378.0 511.3 L376.0 513.0 L374.0 511.9 L372.0 510.2 L370.0 510.8 L368.0 510.6 L366.0 511.2 L364.0 511.0 L362.0 510.0 L360.0 510.3 L358.0 511.0 L356.0 511.1 L354.0 512.1 L352.0 512.2 L350.0 513.4 L348.0 514.7 L346.0 511.8 L344.0 512.4 L342.0 511.7 L340.0 511.7 L338.0 510.2 L336.0 510.1 L334.0 510.9 L332.0 512.2 L330.0 511.2 L328.0 512.3 L326.0 511.9 L324.0 513.4 L322.0 512.9 L320.0 512.5 L318.0 511.1 L316.0 510.2 L314.0 510.6 L312.0 510.7 L310.0 511.2 L308.0 511.6 L306.0 511.2 L304.0 509.9 L302.0 511.2 L300.0 510.9 L298.0 510.0 L296.0 511.3 L294.0 509.9 L292.0 509.6 L290.0 510.4 L288.0 510.5 L286.0 510.4 L284.0 511.6 L282.0 512.3 L280.0 513.8 L278.0 514.4 L276.0 514.2 L274.0 513.5 L272.0 513.1 L270.0 512.3 L268.0 510.9 L266.0 510.8 L264.0 509.7 L262.0 510.7 L260.0 509.1 L258.0 510.2 L256.0 511.1 L254.0 511.8 L252.0 511.4 L250.0 510.0 L248.0 510.2 L246.0 511.1 L244.0 510.1 L242.0 510.1 L240.0 511.5 L238.0 510.9 L236.0 511.6 L234.0 511.5 L232.0 510.3 L230.0 511.6 L228.0 511.7 L226.0 511.6 L224.0 510.1 L222.0 510.6 L220.0 509.1 L218.0 509.0 L216.0 509.3 L214.0 509.8 L212.0 508.9 L210.0 509.0 L208.0 509.3 L206.0 510.3 L204.0 509.6 L202.0 510.6 L200.0 509.2 L198.0 509.9 L196.0 511.0 L194.0 511.6 L192.0 512.7 L190.0 513.6 L188.0 513.4 L186.0 514.4 L184.0 514.2 L182.0 515.0 L180.0 514.5 L178.0 514.2 L176.0 513.8 L174.0 513.4 L172.0 512.4 L170.0 511.9 L168.0 512.1 L166.0 510.5 L164.0 510.6 L162.0 510.2 L160.0 510.8 L158.0 509.9 L156.0 510.8 L154.0 512.1 L152.0 511.4 L150.0 512.9 L148.0 513.1 L146.0 512.6 L144.0 511.2 L142.0 510.9 L140.0 512.5 L138.0 511.4 L136.0 512.5 L134.0 511.6 L132.0 510.6 L130.0 511.4 L128.0 511.8 L126.0 512.4 L124.0 513.6 L122.0 512.7 L120.0 513.7 L118.0 513.4 L116.0 512.4 L114.0 511.2 L112.0 510.3 L110.0 510.4 L108.0 510.5 L106.0 511.0 L104.0 510.0 L102.0 511.1 L100.0 512.0 L98.0 511.2 L96.0 510.4 L94.0 509.8 L92.0 510.8 L90.0 512.0 L88.0 512.4 L86.0 511.8 L84.0 512.6 L82.0 512.4 L80.0 511.5 L78.0 511.8 L76.0 510.9 L74.0 509.6 L72.0 510.6 L70.0 509.3 L68.0 509.7 L66.0 509.6 L64.0 508.7 L62.0 509.3 L60.0 508.5 L58.0 511.3 L56.0 512.5 L54.0 511.1 L52.0 512.1 L50.0 511.8 L48.0 511.6 L46.0 512.5 L44.0 512.4 L42.0 511.2 L40.0 512.1 L38.0 510.6 L36.0 510.2 L34.0 510.1 L32.0 510.5 L30.0 509.5 L28.0 510.3 L26.0 511.5 L24.0 511.7 L22.0 513.2 L20.0 512.6 L18.0 513.1 L16.0 512.1 L14.0 513.2 L12.0 513.8 L10.0 513.1 L8.0 512.0 L6.0 513.8 L4.0 509.2 L2.0 508.0 L0.0 510.9" fill="none" stroke="#000" stroke-width="1.1" stroke-dasharray="1.2 1.5"/></svg>
</body></html>
